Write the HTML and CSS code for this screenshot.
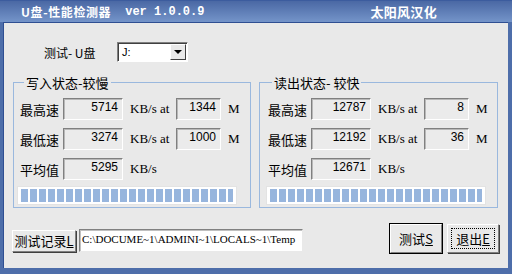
FILE: index.html
```html
<!DOCTYPE html>
<html lang="zh-CN">

<head>
    <meta charset="UTF-8">
    <title>U盘-性能检测器</title>
    <link rel="stylesheet" href="styles.css">
</head>

<body>
    <div class="ventana">
        <div class="titulo">
            <span class="titulo-app">U盘-性能检测器</span>
            <span class="titulo-ver">ver 1.0.0.9</span>
            <span class="titulo-autor">太阳风汉化</span>
        </div>
        <div class="cliente">
            <div class="fila-disco">
                <span class="etiqueta-disco">测试- U盘</span>
                <div class="combo">
                    <span class="combo-valor">J:</span>
                    <span class="combo-flecha"><span class="triangulo"></span></span>
                </div>
            </div>

            <div class="grupos">
                <fieldset class="grupo grupo-izq">
                    <legend>写入状态-较慢</legend>
                    <div class="fila">
                        <span class="etiqueta">最高速</span>
                        <span class="caja caja-vel">5714</span>
                        <span class="unidad">KB/s at</span>
                        <span class="caja caja-pos">1344</span>
                        <span class="unidad-m">M</span>
                    </div>
                    <div class="fila">
                        <span class="etiqueta">最低速</span>
                        <span class="caja caja-vel">3274</span>
                        <span class="unidad">KB/s at</span>
                        <span class="caja caja-pos">1000</span>
                        <span class="unidad-m">M</span>
                    </div>
                    <div class="fila">
                        <span class="etiqueta">平均值</span>
                        <span class="caja caja-vel">5295</span>
                        <span class="unidad">KB/s</span>
                    </div>
                    <div class="progreso"><div class="progreso-relleno"></div></div>
                </fieldset>

                <fieldset class="grupo grupo-der">
                    <legend>读出状态- 较快</legend>
                    <div class="fila">
                        <span class="etiqueta">最高速</span>
                        <span class="caja caja-vel">12787</span>
                        <span class="unidad">KB/s at</span>
                        <span class="caja caja-pos">8</span>
                        <span class="unidad-m">M</span>
                    </div>
                    <div class="fila">
                        <span class="etiqueta">最低速</span>
                        <span class="caja caja-vel">12192</span>
                        <span class="unidad">KB/s at</span>
                        <span class="caja caja-pos">36</span>
                        <span class="unidad-m">M</span>
                    </div>
                    <div class="fila">
                        <span class="etiqueta">平均值</span>
                        <span class="caja caja-vel">12671</span>
                        <span class="unidad">KB/s</span>
                    </div>
                    <div class="progreso"><div class="progreso-relleno"></div></div>
                </fieldset>
            </div>

            <div class="fila-inferior">
                <button class="boton boton-registro">测试记录<u>L</u></button>
                <div class="ruta">C:\DOCUME~1\ADMINI~1\LOCALS~1\Temp</div>
                <div class="espacio"></div>
                <button class="boton boton-grande boton-defecto">测试<u>S</u></button>
                <button class="boton boton-grande boton-foco"><span class="foco">退出<u>E</u></span></button>
            </div>
        </div>
    </div>
</body>

</html>
```

FILE: styles.css
```css
* {
    box-sizing: border-box;
}

body {
    margin: 0;
    font-family: "Noto Sans CJK SC", sans-serif;
    font-size: 12px;
    color: black;
}

.ventana {
    width: 512px;
    height: 274px;
    display: flex;
    flex-direction: column;
    background-color: #4e6eaa;
}

.titulo {
    height: 22px;
    display: flex;
    align-items: center;
    padding-left: 21px;
    color: white;
    font-weight: bold;
    background: linear-gradient(#4a68a4, #7494c9);
    border-top: 1px solid #3c5c9e;
}

.titulo-app {
    font-size: 12px;
    letter-spacing: 0.6px;
}

.titulo-ver {
    font-family: "Liberation Mono", monospace;
    font-size: 12px;
    margin-left: 14px;
}

.titulo-autor {
    font-size: 13px;
    margin-left: 166px;
    letter-spacing: 0.3px;
}

.cliente {
    flex: 1;
    margin: 0 4px 6px 3px;
    background-color: #e9e9e9;
    border-top: 1px solid #2f4f92;
    border-left: 1px solid #2f4f92;
    display: flex;
    flex-direction: column;
}

.fila-disco {
    display: flex;
    align-items: center;
    margin-top: 19px;
    padding-left: 40px;
}

.etiqueta-disco {
    width: 73px;
}

.combo {
    width: 71px;
    height: 20px;
    display: flex;
    background-color: white;
    border-top: 1px solid #808080;
    border-left: 1px solid #808080;
    border-right: 1px solid #ffffff;
    border-bottom: 1px solid #ffffff;
    box-shadow: inset 1px 1px 0 #404040;
    padding: 1px 1px 1px 2px;
}

.combo-valor {
    flex: 1;
    font-family: "Liberation Sans", sans-serif;
    font-size: 11px;
    line-height: 16px;
    padding-left: 2px;
}

.combo-flecha {
    width: 16px;
    background-color: #e9e9e9;
    border-top: 1px solid #ffffff;
    border-left: 1px solid #ffffff;
    border-right: 1px solid #404040;
    border-bottom: 1px solid #404040;
    display: flex;
    align-items: center;
    justify-content: center;
}

.triangulo {
    width: 0;
    height: 0;
    border-left: 4px solid transparent;
    border-right: 4px solid transparent;
    border-top: 4px solid black;
}

.grupos {
    display: flex;
    margin-top: 13px;
    padding-left: 9px;
    gap: 8px;
}

.grupo {
    margin: 0;
    height: 133px;
    border: 1px solid #9ab8de;
    padding: 8px 0 0 6px;
}

.grupo-izq {
    width: 238px;
}

.grupo-der {
    width: 239px;
    padding-left: 8px;
}

legend {
    padding: 0 2px;
    margin-left: 4px;
    font-size: 13px;
    line-height: 15px;
}

.fila {
    display: flex;
    align-items: center;
    height: 22px;
    margin-bottom: 8px;
}

.etiqueta {
    width: 43px;
    font-size: 13px;
}

.caja {
    height: 22px;
    background-color: #ebebeb;
    border-top: 1px solid #808080;
    border-left: 1px solid #808080;
    border-right: 1px solid #ffffff;
    border-bottom: 1px solid #ffffff;
    box-shadow: inset 1px 1px 0 #b8b8b8;
    font-family: "Liberation Sans", sans-serif;
    font-size: 12px;
    text-align: right;
    padding-right: 4px;
    line-height: 17px;
}

.caja-vel {
    width: 60px;
}

.caja-pos {
    width: 45px;
}

.unidad {
    font-family: "Liberation Serif", serif;
    font-size: 13px;
    width: 53px;
    padding-left: 7px;
}

.unidad-m {
    font-family: "Liberation Serif", serif;
    font-size: 13px;
    padding-left: 7px;
}

.progreso {
    width: 218px;
    height: 17px;
    margin-left: -2px;
    margin-top: -1px;
    border: 1px solid #ffffff;
    background-color: #ffffff;
    padding: 1px 2px;
    box-shadow: 0 0 0 1px #e3e3e3;
}

.grupo-der .progreso {
    margin-left: -1px;
}

.progreso-relleno {
    height: 100%;
    background: repeating-linear-gradient(90deg, #97b5dd 0, #97b5dd 7px, #ffffff 7px, #ffffff 9px);
}

.fila-inferior {
    display: flex;
    align-items: flex-end;
    margin-top: 16px;
    padding-left: 8px;
}

.boton {
    font-family: "Noto Sans CJK SC", sans-serif;
    font-size: 13px;
    color: black;
    background-color: #e9e9e9;
    border-top: 1px solid #ffffff;
    border-left: 1px solid #ffffff;
    border-right: 1px solid #808080;
    border-bottom: 1px solid #808080;
    box-shadow: 1px 1px 0 #404040;
    padding: 0;
    cursor: pointer;
}

.boton-registro {
    width: 64px;
    height: 22px;
    line-height: 18px;
}

.ruta {
    width: 224px;
    height: 23px;
    margin-left: 3px;
    background-color: white;
    border-top: 1px solid #808080;
    border-left: 1px solid #808080;
    border-right: 1px solid #e9e9e9;
    border-bottom: 1px solid #e9e9e9;
    box-shadow: inset 1px 1px 0 #c0c0c0;
    font-family: "Liberation Serif", serif;
    font-size: 11px;
    line-height: 19px;
    padding-left: 2px;
    white-space: nowrap;
    overflow: hidden;
}

.espacio {
    flex: 1;
}

.boton-grande {
    width: 52px;
    height: 29px;
    margin-bottom: -1px;
}

.boton-defecto {
    outline: 1px solid black;
    margin-right: 5px;
}

.boton-foco {
    margin-right: 9px;
    padding: 3px;
}

.foco {
    display: block;
    height: 100%;
    border: 1px dotted black;
    line-height: 19px;
}
```
